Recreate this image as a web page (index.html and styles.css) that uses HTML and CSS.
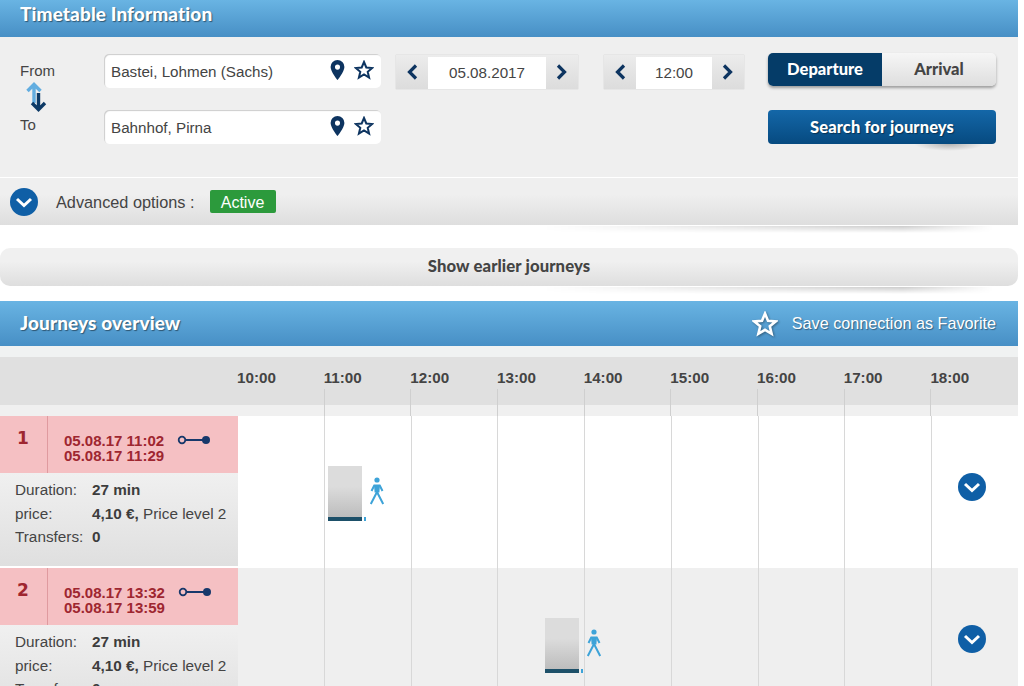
FILE: index.html
```html
<!DOCTYPE html>
<html lang="en">
<head>
    <meta charset="UTF-8">
    <title>Timetable Information</title>
    <link rel="stylesheet" href="styles.css">
</head>
<body>
    <svg class="defs" width="0" height="0">
        <symbol id="pin" viewBox="0 0 16 22"><path fill-rule="evenodd" d="M8 0a7.6 7.6 0 0 0-7.6 7.6C.4 12.6 8 22 8 22s7.600-9.400 7.600-14.400A7.600 7.600 0 0 0 8 0zm0 5a2.800 2.800 0 1 1 0 5.600A2.800 2.800 0 0 1 8 5z"/></symbol>
        <symbol id="star" viewBox="0 0 20 20"><path fill="none" stroke="currentColor" stroke-width="2" stroke-linejoin="miter" d="M10 2l2.300 5.500 5.900.5-4.500 3.800 1.400 5.800L10 14.500l-5.100 3.100 1.400-5.800L1.800 8l5.900-.5z"/></symbol>
        <symbol id="prev" viewBox="0 0 12 16"><path fill="none" stroke="currentColor" stroke-width="3.200" d="M10 1.500L3.500 8l6.500 6.500"/></symbol>
        <symbol id="next" viewBox="0 0 12 16"><path fill="none" stroke="currentColor" stroke-width="3.200" d="M2 1.500L8.500 8 2 14.500"/></symbol>
        <symbol id="expand" viewBox="0 0 28 28"><circle cx="14" cy="14" r="14" fill="#0f5fa6"/><path fill="none" stroke="#fff" stroke-width="3" d="M7 11l7 6.500 7-6.500"/></symbol>
        <symbol id="link" viewBox="0 0 34 12"><circle cx="5" cy="6" r="3.300" fill="none" stroke="#17386b" stroke-width="1.800"/><path stroke="#17386b" stroke-width="2" d="M8 6h20"/><circle cx="29" cy="6" r="4" fill="#17386b"/></symbol>
        <symbol id="walk" viewBox="0 0 16 28"><circle cx="8" cy="3" r="2.600" fill="#3da3d8"/><path fill="#3da3d8" d="M5 7.500h6l-.6 8H5.600z"/><path fill="none" stroke="#3da3d8" stroke-width="2" d="M8 15L1.800 27M8 15l6.200 12M5.500 8L2.500 14M10.500 8l3 6"/></symbol>
    </svg>

    <div class="page">
        <div class="title-bar"><h1>Timetable Information</h1></div>

        <div class="search-form">
            <div class="labels">
                <span>From</span>
                <svg class="swap" width="22" height="30" viewBox="0 0 22 30">
                    <path fill="none" stroke="#62ade0" stroke-width="3.400" d="M1.500 9L8 2.500 14.500 9M8 3v18"/>
                    <path fill="none" stroke="#0d3a66" stroke-width="3.400" d="M6 21l6.500 6.500L19 21M12.500 27V11"/>
                </svg>
                <span>To</span>
            </div>
            <div class="stops">
                <div class="stop"><span class="stop-name">Bastei, Lohmen (Sachs)</span><svg class="pin" width="15" height="20"><use href="#pin"/></svg><svg class="star" width="20" height="20"><use href="#star"/></svg></div>
                <div class="stop"><span class="stop-name">Bahnhof, Pirna</span><svg class="pin" width="15" height="20"><use href="#pin"/></svg><svg class="star" width="20" height="20"><use href="#star"/></svg></div>
            </div>
            <div class="stepper stepper-date">
                <span class="step"><svg width="12" height="16"><use href="#prev"/></svg></span>
                <span class="step-value">05.08.2017</span>
                <span class="step"><svg width="12" height="16"><use href="#next"/></svg></span>
            </div>
            <div class="stepper stepper-time">
                <span class="step"><svg width="12" height="16"><use href="#prev"/></svg></span>
                <span class="step-value">12:00</span>
                <span class="step"><svg width="12" height="16"><use href="#next"/></svg></span>
            </div>
            <div class="actions">
                <div class="toggle">
                    <span class="toggle-on">Departure</span>
                    <span class="toggle-off">Arrival</span>
                </div>
                <div class="search-btn">Search for journeys</div>
            </div>
        </div>

        <div class="advanced shadowed">
            <svg width="28" height="28"><use href="#expand"/></svg>
            <span class="advanced-label">Advanced options :</span>
            <span class="badge">Active</span>
        </div>

        <div class="earlier shadowed">Show earlier journeys</div>

        <div class="title-bar overview-bar">
            <h2>Journeys overview</h2>
            <div class="save">
                <svg class="save-star" width="26" height="26"><use href="#star"/></svg>
                <span>Save connection as Favorite</span>
            </div>
        </div>

        <div class="hours">
            <div class="hours-spacer"></div>
            <div class="hour">10:00</div>
            <div class="hour">11:00</div>
            <div class="hour">12:00</div>
            <div class="hour">13:00</div>
            <div class="hour">14:00</div>
            <div class="hour">15:00</div>
            <div class="hour">16:00</div>
            <div class="hour">17:00</div>
            <div class="hour">18:00</div>
        </div>

        <div class="journey">
            <div class="summary">
                <div class="summary-head">
                    <div class="num">1</div>
                    <div class="times">05.08.17 11:02<br>05.08.17 11:29</div>
                    <svg class="link-icon" width="34" height="12"><use href="#link"/></svg>
                </div>
                <div class="details">
                    <div class="detail"><span class="key">Duration:</span><b>27 min</b></div>
                    <div class="detail"><span class="key">price:</span><b>4,10 €,</b>&nbsp;Price level 2</div>
                    <div class="detail"><span class="key">Transfers:</span><b>0</b></div>
                </div>
            </div>
            <div class="track">
                <i></i><i></i><i></i><i></i><i></i><i></i><i></i><i></i><i></i>
                <div class="leg" style="left: 90px"><div class="leg-bar"></div><div class="leg-tick"></div></div>
                <svg class="walk" style="left: 131px" width="16" height="28"><use href="#walk"/></svg>
                <svg class="more" width="28" height="28"><use href="#expand"/></svg>
            </div>
        </div>

        <div class="journey journey-alt">
            <div class="summary">
                <div class="summary-head">
                    <div class="num">2</div>
                    <div class="times">05.08.17 13:32<br>05.08.17 13:59</div>
                    <svg class="link-icon" width="34" height="12"><use href="#link"/></svg>
                </div>
                <div class="details">
                    <div class="detail"><span class="key">Duration:</span><b>27 min</b></div>
                    <div class="detail"><span class="key">price:</span><b>4,10 €,</b>&nbsp;Price level 2</div>
                    <div class="detail"><span class="key">Transfers:</span><b>0</b></div>
                </div>
            </div>
            <div class="track">
                <i></i><i></i><i></i><i></i><i></i><i></i><i></i><i></i><i></i>
                <div class="leg" style="left: 307px"><div class="leg-bar"></div><div class="leg-tick"></div></div>
                <svg class="walk" style="left: 348px" width="16" height="28"><use href="#walk"/></svg>
                <svg class="more" width="28" height="28"><use href="#expand"/></svg>
            </div>
        </div>
    </div>
</body>
</html>
```

FILE: styles.css
```css
html, body { margin: 0; height: 686px; overflow: hidden; background: #fff; }
body { font-family: "Liberation Sans", Arial, sans-serif; color: #444; font-size: 16px; }
.defs { position: absolute; }
.page { width: 1018px; }

.title-bar {
    height: 37px;
    display: flex;
    align-items: center;
    justify-content: space-between;
    padding: 0 22px 0 20px;
    background: linear-gradient(#69b4e3, #478fc5);
    box-sizing: border-box;
}
.title-bar h1, .title-bar h2 {
    margin: 0;
    font-family: Lato, sans-serif;
    font-weight: 900;
    font-size: 19px;
    letter-spacing: 0.1px;
    color: #fff;
    text-shadow: 1px 1px 1px rgba(0, 0, 0, 0.45);
}
.title-bar h1 { margin-top: -11px; }
.title-bar h2 { margin-top: -3px; }

.search-form {
    height: 141px;
    box-sizing: border-box;
    padding-top: 17px;
    display: flex;
    align-items: flex-start;
    background: #efefef;
    border-bottom: 1px solid #fff;
}
.labels {
    width: 104px;
    padding: 8px 0 0 20px;
    box-sizing: border-box;
    display: flex;
    flex-direction: column;
    font-size: 15px;
    line-height: 18px;
}
.swap { margin: 2px 0 0 6px; }
.labels span:last-child { margin-top: 4px; }

.stops { width: 277px; display: flex; flex-direction: column; gap: 22px; }
.stop {
    height: 34px;
    display: flex;
    align-items: center;
    padding: 0 7px;
    background: #fff;
    border-radius: 5px;
    box-shadow: inset 1px 1px 1px #ccc;
    color: #0d3460;
}
.stop-name { flex: 1; color: #444; font-size: 15.200px; margin-top: 1px; }
.pin { fill: #0d3460; margin-right: 9px; margin-top: -3px; }
.star { margin-top: -2px; }

.stepper {
    height: 34px;
    margin-top: 1px;
    display: flex;
    background: linear-gradient(#ececec, #dcdcdc);
    box-shadow: 0 0 1px #bbb;
    color: #0d3460;
}
.stepper-date { margin-left: 15px; }
.stepper-time { margin-left: 26px; }
.step { width: 32px; display: flex; align-items: center; justify-content: center; }
.step-value {
    background: #fff;
    color: #444;
    display: flex;
    align-items: center;
    justify-content: center;
    margin-top: 2px;
    padding-bottom: 2px;
    box-sizing: border-box;
    font-size: 15.200px;
}
.stepper-date .step-value { width: 118px; }
.stepper-time .step-value { width: 76px; }

.actions { width: 228px; margin-left: 24px; margin-top: -1px; display: flex; flex-direction: column; gap: 24px; }
.toggle {
    display: flex;
    height: 33px;
    font-family: Lato, sans-serif;
    font-weight: 900;
    font-size: 16.500px;
    border-radius: 5px;
    box-shadow: 0 2px 3px rgba(0, 0, 0, 0.35);
}
.toggle span { display: flex; align-items: center; justify-content: center; padding-bottom: 1px; box-sizing: border-box; }
.toggle-on { width: 114px; background: #053c68; color: #fff; border-radius: 5px 0 0 5px; }
.toggle-off { flex: 1; background: linear-gradient(#f6f6f6, #dedede); color: #444; border-radius: 0 5px 5px 0; }
.search-btn {
    position: relative;
    height: 34px;
    display: flex;
    align-items: center;
    justify-content: center;
    font-family: Lato, sans-serif;
    font-weight: 900;
    font-size: 16.500px;
    letter-spacing: 0.1px;
    color: #fff;
    border-radius: 4px;
    background: linear-gradient(#1467a8, #064a80);
    text-shadow: 1px 1px 1px rgba(0, 0, 0, 0.4);
}
.search-btn::after {
    content: "";
    position: absolute;
    right: 12px;
    bottom: -7px;
    width: 70px;
    height: 7px;
    background: radial-gradient(ellipse at 50% 0, rgba(0, 0, 0, 0.25), transparent 70%);
}

.advanced {
    height: 47px;
    box-sizing: border-box;
    padding-left: 10px;
    display: flex;
    align-items: center;
    background: linear-gradient(#efefef 35%, #dedede);
}
.advanced-label { margin: 1px 0 0 18px; font-size: 16.300px; }
.badge {
    margin-left: 15px;
    width: 66px;
    height: 23px;
    line-height: 25px;
    text-align: center;
    background: #2c9a3c;
    color: #fff;
    border-radius: 2px;
    font-size: 16px;
}

.shadowed { position: relative; }
.shadowed::after {
    content: "";
    position: absolute;
    right: 25px;
    bottom: -8px;
    width: 450px;
    height: 7px;
    background: linear-gradient(to right, transparent, rgba(0, 0, 0, 0.2) 80%, transparent);
    -webkit-mask-image: linear-gradient(#000, transparent);
    mask-image: linear-gradient(#000, transparent);
}

.earlier {
    margin-top: 23px;
    height: 38px;
    box-sizing: border-box;
    padding-bottom: 2px;
    display: flex;
    align-items: center;
    justify-content: center;
    border-radius: 10px;
    background: linear-gradient(#f0f0f0 35%, #dedede);
    font-family: Lato, sans-serif;
    font-weight: 900;
    font-size: 16.700px;
    letter-spacing: 0.1px;
    color: #444;
}

.overview-bar { margin-top: 15px; height: 45px; }
.save { display: flex; align-items: center; gap: 14px; color: #fff; font-size: 16.200px; text-shadow: 1px 1px 1px rgba(0, 0, 0, 0.4); }
.save-star { color: #fff; filter: drop-shadow(1px 1px 1px rgba(0, 0, 0, 0.4)); }

.hours {
    padding-top: 11px;
    height: 70px;
    box-sizing: border-box;
    display: flex;
    background: linear-gradient(#f0f2f2 11px, #e0e0e0 11px, #e0e0e0 59px, #f0f0f0 59px);
}
.hours-spacer { width: 238px; }
.hour {
    position: relative;
    flex: 1;
    margin-left: -1px;
    margin-right: 1px;
    padding-top: 12px;
    font-weight: bold;
    font-size: 15.200px;
    color: #444;
}
.hour::after {
    content: "";
    position: absolute;
    left: 0;
    top: 32px;
    bottom: 0;
    width: 1px;
    background: #cfcfcf;
}
.hour:nth-child(2)::after { display: none; }

.journey { display: flex; height: 152px; }
.journey-alt { background: #efefef; }
.summary { width: 238px; height: 150px; flex: none; display: flex; flex-direction: column; }
.summary-head {
    height: 57px;
    display: flex;
    background: #f5c0c3;
    color: #9e2630;
    font-weight: bold;
}
.num {
    width: 48px;
    padding: 12px 0 0 17px;
    box-sizing: border-box;
    border-right: 1px solid #df9a9f;
    font-family: "DejaVu Sans", sans-serif;
    font-size: 17px;
}
.times { margin: 17px 0 0 16px; font-size: 15px; line-height: 15px; }
.link-icon { margin: 18px 0 0 13px; }
.details {
    flex: 1;
    padding: 5px 0 0 15px;
    background: linear-gradient(#f0f0f0, #dfdfdf);
    font-size: 15.300px;
    line-height: 23.700px;
}
.detail { display: flex; white-space: nowrap; }
.key { width: 77px; }
.detail b { color: #3d3d3d; }

.track { position: relative; flex: 1; display: flex; }
.track i { flex: 1; border-right: 1px solid #d8d8d8; }
.track i:last-of-type { border-right: none; }
.leg { position: absolute; top: 50px; display: flex; align-items: flex-end; gap: 2px; }
.leg-bar {
    width: 34px;
    height: 55px;
    box-sizing: border-box;
    background: linear-gradient(#dcdcdc 40%, #bdbdbd);
    border-bottom: 4px solid #1d5069;
}
.leg-tick { width: 2px; height: 4px; background: #3da3d8; }
.walk { position: absolute; top: 61px; }
.more { position: absolute; right: 32px; top: 57px; }
```
